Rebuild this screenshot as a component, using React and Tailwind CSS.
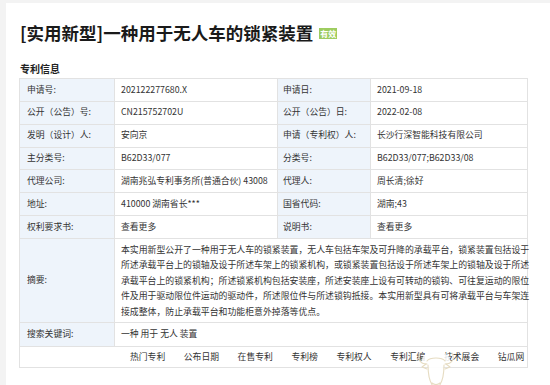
import React from "react";

const rows = [
  ["申请号:", "202122277680.X", "申请日:", "2021-09-18"],
  ["公开（公告）号:", "CN215752702U", "公开（公告）日:", "2022-02-08"],
  ["发明（设计）人:", "安向京", "申请（专利权）人:", "长沙行深智能科技有限公司"],
  ["主分类号:", "B62D33/077", "分类号:", "B62D33/077;B62D33/08"],
  ["代理公司:", "湖南兆弘专利事务所(普通合伙) 43008", "代理人:", "周长清;徐好"],
  ["地址:", "410000 湖南省长***", "国省代码:", "湖南;43"],
  ["权利要求书:", "查看更多", "说明书:", "查看更多"],
];

const abstractLines = [
  "本实用新型公开了一种用于无人车的锁紧装置，无人车包括车架及可升降的承载平台，锁紧装置包括设于",
  "所述承载平台上的锁轴及设于所述车架上的锁紧机构，或锁紧装置包括设于所述车架上的锁轴及设于所述",
  "承载平台上的锁紧机构；所述锁紧机构包括安装座，所述安装座上设有可转动的锁钩、可往复运动的限位",
  "件及用于驱动限位件运动的驱动件，所述限位件与所述锁钩抵接。本实用新型具有可将承载平台与车架连",
  "接成整体，防止承载平台和功能柜意外掉落等优点。",
];

const links = ["热门专利", "公布日期", "在售专利", "专利榜", "专利权人", "专利汇编", "技术展会", "钻瓜网"];

export default function App() {
  return (
    <div className="w-[550px] h-[385px] bg-[#f3f3f3] pt-[3px] pl-[6px] overflow-hidden font-['Noto_Sans_CJK_SC',sans-serif] text-[#333]">
      <div className="relative bg-white h-full pl-[13px]">
        <div className="flex items-center h-[59px] pt-[1px]">
          <h1 className="text-[17.5px] font-bold text-[#1a1a1a] leading-none ml-[1px]">[实用新型]一种用于无人车的锁紧装置</h1>
          <span className="ml-[6px] mt-[1px] bg-[#9dcc5f] text-white text-[8px] font-bold leading-[11px] px-[1px] h-[11px]">有效</span>
        </div>
        <div className="text-[10px] font-bold text-[#222] leading-none ml-[1px] mb-[2px] h-[14px] flex items-center">专利信息</div>
        <div className="w-[509px] border border-[#e2e2e2] text-[8.8px] leading-none">
          {rows.map((r, i) => (
            <div key={i} className="grid grid-cols-[95px_163px_93px_157px] h-[22.86px] border-b border-[#e2e2e2]">
              <div className="bg-[#eef4fb] border-r border-[#e2e2e2] flex items-center pl-[7px] whitespace-nowrap">{r[0]}</div>
              <div className="border-r border-[#e2e2e2] flex items-center pl-[6px] whitespace-nowrap">{r[1]}</div>
              <div className="bg-[#eef4fb] border-r border-[#e2e2e2] flex items-center pl-[5px] whitespace-nowrap">{r[2]}</div>
              <div className="flex items-center pl-[6px] whitespace-nowrap">{r[3]}</div>
            </div>
          ))}
          <div className="grid grid-cols-[95px_414px] h-[84px] border-b border-[#e2e2e2]">
            <div className="bg-[#eef4fb] border-r border-[#e2e2e2] flex items-center pl-[7px]">摘要:</div>
            <div className="flex flex-col justify-center pl-[6px] text-[8.9px]">
              {abstractLines.map((l, i) => (
                <div key={i} className="h-[15.5px] leading-[15.5px] whitespace-nowrap">{l}</div>
              ))}
            </div>
          </div>
          <div className="grid grid-cols-[95px_414px] h-[23.6px] border-b border-[#e2e2e2]">
            <div className="bg-[#eef4fb] border-r border-[#e2e2e2] flex items-center pl-[7px]">搜索关键词:</div>
            <div className="flex items-center pl-[6px]">一种 用于 无人 装置</div>
          </div>
          <div className="h-[20.7px] flex items-center pl-[110px] gap-[18.6px] whitespace-nowrap">
            {links.map((l) => (
              <span key={l}>{l}</span>
            ))}
          </div>
        </div>
        <svg className="absolute left-[408px] top-[344px]" width="44" height="45" viewBox="0 0 44 45" fill="none" stroke="#e6dcc2" strokeWidth="1.1" strokeLinecap="round" strokeLinejoin="round">
          <ellipse cx="22" cy="13" rx="14" ry="9" fill="#ffffff" fillOpacity="0.85" stroke="none" />
          <path d="M6 6 C3 12 6 17 13 17" />
          <path d="M38 6 C41 12 38 17 31 17" />
          <path d="M13 14 C16 10 28 10 31 14" />
          <path d="M12 17 L8 20 L13 22" />
          <path d="M32 17 L36 20 L31 22" />
          <path d="M14 18 C14 28 16 38 22 42 C28 38 30 28 30 18" fill="#ffffff" fillOpacity="0.6" />
          <path d="M18 36 C20 38 24 38 26 36" />
        </svg>
      </div>
    </div>
  );
}
